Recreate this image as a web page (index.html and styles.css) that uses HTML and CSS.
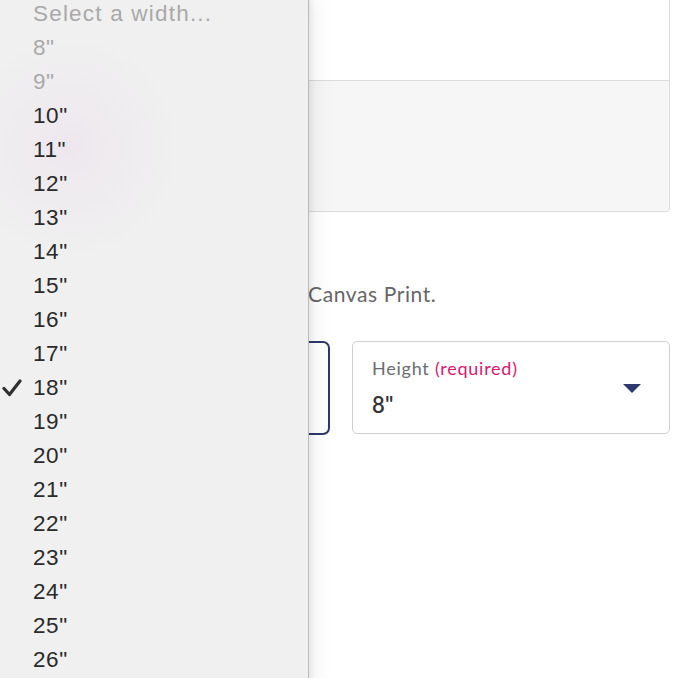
FILE: index.html
```html
<!DOCTYPE html>
<html lang="en">
<head>
<meta charset="utf-8">
<title>Canvas Print size</title>
<link rel="stylesheet" href="styles.css">
</head>
<body>
<main class="page">
  <section class="card">
    <div class="card-body"></div>
    <div class="card-foot"></div>
  </section>
  <p class="intro">Canvas Print.</p>
  <div class="selects">
    <div class="select select-focused" aria-label="Width (required)"></div>
    <div class="select">
      <span class="select-label">Height <em>(required)</em></span>
      <span class="select-value">8"</span>
      <span class="caret"></span>
    </div>
  </div>
</main>

<ul class="menu">
  <li class="menu-item disabled placeholder">Select a width...</li>
  <li class="menu-item disabled">8"</li>
  <li class="menu-item disabled">9"</li>
  <li class="menu-item">10"</li>
  <li class="menu-item">11"</li>
  <li class="menu-item">12"</li>
  <li class="menu-item">13"</li>
  <li class="menu-item">14"</li>
  <li class="menu-item">15"</li>
  <li class="menu-item">16"</li>
  <li class="menu-item">17"</li>
  <li class="menu-item checked"><svg class="check" viewBox="0 0 20 18" width="20" height="18"><polyline points="2,9.5 7.5,15.5 18,2" fill="none" stroke="#303030" stroke-width="3.2" stroke-linecap="round" stroke-linejoin="round"/></svg>18"</li>
  <li class="menu-item">19"</li>
  <li class="menu-item">20"</li>
  <li class="menu-item">21"</li>
  <li class="menu-item">22"</li>
  <li class="menu-item">23"</li>
  <li class="menu-item">24"</li>
  <li class="menu-item">25"</li>
  <li class="menu-item">26"</li>
</ul>
</body>
</html>
```

FILE: styles.css
```css
* { box-sizing: border-box; }

html, body {
  margin: 0;
  padding: 0;
  background: #ffffff;
  overflow: hidden;
  height: 100%;
}

.page {
  width: 658px;
  margin-left: 12px;
  font-family: Lato, "Open Sans", sans-serif;
  color: #666;
}

.card {
  border: 1px solid #dcdcdc;
  border-top: none;
  border-radius: 0 0 4px 4px;
  overflow: hidden;
}

.card-body {
  height: 81px;
  background: #fff;
  border-bottom: 1px solid #dcdcdc;
}

.card-foot {
  height: 130px;
  background: #f6f6f6;
}

.intro {
  margin: 70px 0 0 296px;
  font-size: 21px;
  line-height: 24px;
  letter-spacing: 0.6px;
  color: #666;
  white-space: nowrap;
}

.selects {
  display: grid;
  grid-template-columns: 1fr 1fr;
  gap: 22px;
  margin-top: 35px;
}

.select {
  position: relative;
  height: 93px;
  border: 1px solid #cfcfcf;
  border-radius: 5px;
  padding: 15px 19px 0;
  display: flex;
  flex-direction: column;
}

.select-focused {
  border: 2px solid #2d3a6b;
  border-radius: 7px;
  height: 94px;
}

.select-label {
  font-size: 18px;
  line-height: 22px;
  letter-spacing: 0.75px;
  color: #6b6b72;
}

.select-label em {
  font-style: normal;
  color: #d8186f;
}

.select-value {
  margin-top: 13px;
  font-size: 22px;
  line-height: 26px;
  color: #333;
  font-weight: 600;
  letter-spacing: 0.3px;
}

.caret {
  position: absolute;
  right: 28px;
  top: 42px;
  width: 0;
  height: 0;
  border-left: 9px solid transparent;
  border-right: 9px solid transparent;
  border-top: 9px solid #2d3a6b;
}

/* native dropdown menu overlay */
.menu {
  position: absolute;
  left: 0;
  top: -3px;
  width: 309px;
  height: 700px;
  margin: 0;
  padding: 0;
  list-style: none;
  background:
    radial-gradient(circle at 70px 150px, rgba(236, 226, 236, 0.6) 0, rgba(240, 240, 240, 0) 110px),
    #f0f0f0;
  border-right: 1px solid #b9b9b9;
  box-shadow: 2px 0 6px rgba(0, 0, 0, 0.08), 8px 0 20px rgba(0, 0, 0, 0.05);
  font-family: "Liberation Sans", Arial, sans-serif;
}

.menu-item {
  position: relative;
  height: 34px;
  line-height: 34px;
  padding-left: 33px;
  font-size: 22.5px;
  letter-spacing: 0.6px;
  color: #2a2a2a;
  white-space: nowrap;
}

.menu-item.disabled {
  color: #a9a9a9;
}

.menu-item.placeholder {
  letter-spacing: 1.2px;
}

.check {
  position: absolute;
  left: 2px;
  top: 8px;
}
```
